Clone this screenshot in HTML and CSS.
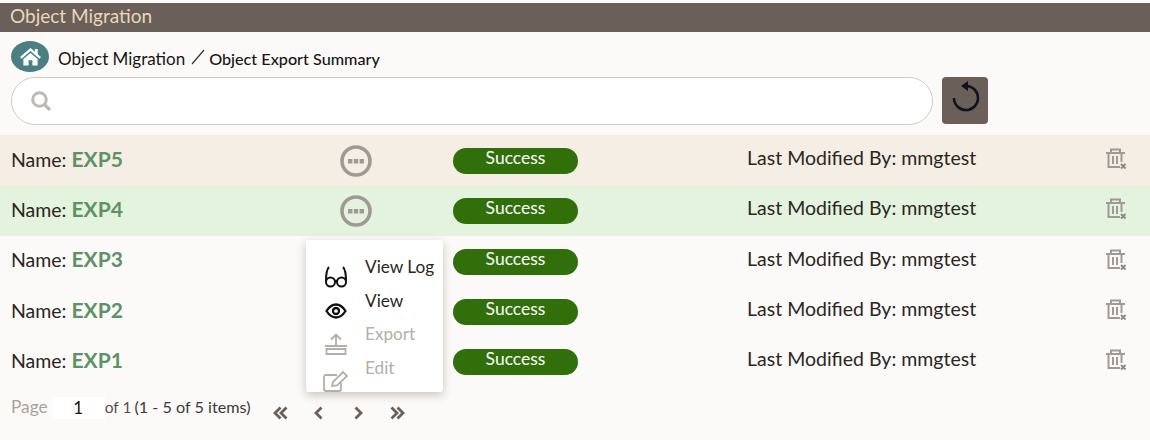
FILE: index.html
```html
<!DOCTYPE html>
<html lang="en">
<head>
<meta charset="utf-8">
<title>Object Migration</title>
<link rel="stylesheet" href="styles.css">
</head>
<body>
<header class="title-bar">Object Migration</header>
<main class="content">
  <nav class="crumbs">
    <span class="home">
      <svg width="23" height="19" viewBox="0 0 24 20"><path fill="#fff" d="M12 1 L1 10.6 L2.6 12.3 L12 4.2 L21.4 12.3 L23 10.6 L19.6 7.6 V2 H16.6 V5 Z M4.5 12.6 V19.5 H10 V14 H14 V19.5 H19.5 V12.6 L12 6.2 Z"/></svg>
    </span>
    <span class="crumb-root">Object Migration</span>
    <svg class="crumb-sep" width="14" height="16" viewBox="0 0 14 16"><path d="M1 15 L13 1" stroke="#333" stroke-width="1.2" fill="none"/></svg>
    <span class="crumb-current">Object Export Summary</span>
  </nav>
  <div class="search-row">
    <div class="search">
      <svg width="22" height="22" viewBox="0 0 22 22"><circle cx="9.5" cy="9.5" r="6.8" fill="none" stroke="#bdbab7" stroke-width="3"/><path d="M14.5 14.5 L20 20" stroke="#bdbab7" stroke-width="3.2"/></svg>
    </div>
    <button class="refresh" type="button" aria-label="Refresh">
      <svg width="46" height="47" viewBox="0 0 46 47"><path d="M24 9 A12 12 0 1 1 12 21" fill="none" stroke="#10131c" stroke-width="2.600"/><path d="M19 9 L26 4 V14 Z" fill="#10131c"/></svg>
    </button>
  </div>
  <section class="rows">
    <div class="row row-sand">
      <div class="name">Name: <b>EXP5</b></div>
      <div class="more"><svg class="more-icon" viewBox="0 0 32 32"><circle cx="16" cy="16" r="14" fill="none" stroke="#a09a96" stroke-width="3.6"/><path d="M8 14 h4.400 v4.400 h-4.400 z M13.800 14 h4.400 v4.400 h-4.400 z M19.600 14 h4.400 v4.400 h-4.400 z" fill="#a09a96"/></svg></div>
      <div class="pill">Success</div>
      <div class="modified">Last Modified By: mmgtest</div>
      <div class="trash"><svg class="trash-icon" viewBox="0 0 22 22"><path d="M1 5 H20 M6 5 V1.500 H15 V5 M3.500 5 V19 H15 M8 8 V16 M12 8 V16 M16.500 5 V14" fill="none" stroke="#a09a96" stroke-width="2"/><path d="M16 16 L20.500 20.500 M20.500 16 L16 20.500" stroke="#8f8a86" stroke-width="2"/></svg></div>
    </div>
    <div class="row row-green">
      <div class="name">Name: <b>EXP4</b></div>
      <div class="more"><svg class="more-icon" viewBox="0 0 32 32"><circle cx="16" cy="16" r="14" fill="none" stroke="#a09a96" stroke-width="3.6"/><path d="M8 14 h4.400 v4.400 h-4.400 z M13.800 14 h4.400 v4.400 h-4.400 z M19.600 14 h4.400 v4.400 h-4.400 z" fill="#a09a96"/></svg></div>
      <div class="pill">Success</div>
      <div class="modified">Last Modified By: mmgtest</div>
      <div class="trash"><svg class="trash-icon" viewBox="0 0 22 22"><path d="M1 5 H20 M6 5 V1.500 H15 V5 M3.500 5 V19 H15 M8 8 V16 M12 8 V16 M16.500 5 V14" fill="none" stroke="#a09a96" stroke-width="2"/><path d="M16 16 L20.500 20.500 M20.500 16 L16 20.500" stroke="#8f8a86" stroke-width="2"/></svg></div>
    </div>
    <div class="row">
      <div class="name">Name: <b>EXP3</b></div>
      <div class="more"></div>
      <div class="pill">Success</div>
      <div class="modified">Last Modified By: mmgtest</div>
      <div class="trash"><svg class="trash-icon" viewBox="0 0 22 22"><path d="M1 5 H20 M6 5 V1.500 H15 V5 M3.500 5 V19 H15 M8 8 V16 M12 8 V16 M16.500 5 V14" fill="none" stroke="#a09a96" stroke-width="2"/><path d="M16 16 L20.500 20.500 M20.500 16 L16 20.500" stroke="#8f8a86" stroke-width="2"/></svg></div>
    </div>
    <div class="row">
      <div class="name">Name: <b>EXP2</b></div>
      <div class="more"></div>
      <div class="pill">Success</div>
      <div class="modified">Last Modified By: mmgtest</div>
      <div class="trash"><svg class="trash-icon" viewBox="0 0 22 22"><path d="M1 5 H20 M6 5 V1.500 H15 V5 M3.500 5 V19 H15 M8 8 V16 M12 8 V16 M16.500 5 V14" fill="none" stroke="#a09a96" stroke-width="2"/><path d="M16 16 L20.500 20.500 M20.500 16 L16 20.500" stroke="#8f8a86" stroke-width="2"/></svg></div>
    </div>
    <div class="row">
      <div class="name">Name: <b>EXP1</b></div>
      <div class="more"></div>
      <div class="pill">Success</div>
      <div class="modified">Last Modified By: mmgtest</div>
      <div class="trash"><svg class="trash-icon" viewBox="0 0 22 22"><path d="M1 5 H20 M6 5 V1.500 H15 V5 M3.500 5 V19 H15 M8 8 V16 M12 8 V16 M16.500 5 V14" fill="none" stroke="#a09a96" stroke-width="2"/><path d="M16 16 L20.500 20.500 M20.500 16 L16 20.500" stroke="#8f8a86" stroke-width="2"/></svg></div>
    </div>
  </section>
  <footer class="pager">
    <div class="pager-info">
      <span class="page-label">Page</span>
      <span class="page-input">1</span>
      <span class="page-of">of 1</span>
      <span class="page-range">(1 - 5 of 5 items)</span>
    </div>
    <div class="pager-nav">
      <svg class="nav-icon" viewBox="0 0 16 14"><path d="M7.500 1.500 L2 7 L7.500 12.500 M13.500 1.500 L8 7 L13.500 12.500" fill="none" stroke="#6a5f59" stroke-width="2.800"/></svg>
      <svg class="nav-icon" viewBox="0 0 16 14"><path d="M10.500 1.500 L5 7 L10.500 12.500" fill="none" stroke="#6a5f59" stroke-width="2.800"/></svg>
      <svg class="nav-icon" viewBox="0 0 16 14"><path d="M5.500 1.500 L11 7 L5.500 12.500" fill="none" stroke="#6a5f59" stroke-width="2.800"/></svg>
      <svg class="nav-icon" viewBox="0 0 16 14"><path d="M2.500 1.500 L8 7 L2.500 12.500 M8.500 1.500 L14 7 L8.500 12.500" fill="none" stroke="#6a5f59" stroke-width="2.800"/></svg>
    </div>
  </footer>
</main>
<div class="menu">
  <div class="menu-icons">
    <svg width="24" height="22" viewBox="0 0 24 22"><path d="M5 1 C3 3 2 8 2 15 M19 1 C21 3 22 8 22 15" fill="none" stroke="#111" stroke-width="2"/><circle cx="6.500" cy="16" r="4.500" fill="none" stroke="#111" stroke-width="2"/><circle cx="17.500" cy="16" r="4.500" fill="none" stroke="#111" stroke-width="2"/><path d="M11 15 H13" stroke="#111" stroke-width="2"/></svg>
    <svg width="22" height="16" viewBox="0 0 22 16"><path d="M1.500 8 C5 2.500 8 1.500 11 1.500 C14 1.500 17 2.500 20.500 8 C17 13.500 14 14.500 11 14.500 C8 14.500 5 13.500 1.500 8 Z" fill="none" stroke="#111" stroke-width="2.300"/><circle cx="11" cy="8" r="3" fill="none" stroke="#111" stroke-width="2.300"/></svg>
    <svg width="22" height="22" viewBox="0 0 22 22"><path d="M11 12 V2 M6 6.500 L11 1.500 L16 6.500 M0 13 H22 M1.500 16 H20.500 V21 H1.500 Z" fill="none" stroke="#b3afab" stroke-width="1.800"/></svg>
    <svg width="26" height="22" viewBox="0 0 26 22"><path d="M18 13 V19 Q18 21 16 21 H3 Q1 21 1 19 V7 Q1 5 3 5 H14" fill="none" stroke="#b3afab" stroke-width="1.800"/><path d="M9 16 L10 12 L20 2 L24 6 L14 15.500 Z" fill="none" stroke="#b3afab" stroke-width="1.800"/></svg>
  </div>
  <ul class="menu-items">
    <li>View Log</li>
    <li>View</li>
    <li class="disabled">Export</li>
    <li class="disabled">Edit</li>
  </ul>
</div>
</body>
</html>
```
FILE: styles.css
```css
* { box-sizing: border-box; }
html, body { margin: 0; height: 100%; }
body {
  position: relative;
  width: 1150px;
  height: 440px;
  overflow: hidden;
  padding-top: 3px;
  background: #fcfaf8;
  font-family: Lato, "Noto Sans", sans-serif;
  color: #2b2622;
}
.title-bar {
  height: 29px;
  padding-left: 10px;
  background: #6a5f59;
  color: #e9d7b7;
  font-size: 19px;
  line-height: 26px;
}
.content { padding: 9px 0 0 11px; }
.crumbs { display: flex; align-items: center; height: 31px; }
.home {
  display: flex;
  align-items: center;
  justify-content: center;
  width: 38px;
  height: 31px;
  border-radius: 50%;
  background: #4b7f83;
}
.crumb-root { margin: 4px 0 0 9px; font-size: 17px; color: #161513; }
.crumb-sep { margin: 0 4px 0 6px; }
.crumb-current { margin-top: 3px; font-size: 16.200px; font-weight: 500; color: #161513; }
.search-row { display: flex; gap: 9px; margin-top: 5px; }
.search {
  display: flex;
  align-items: center;
  width: 922px;
  height: 48px;
  padding-left: 18px;
  background: #fff;
  border: 1px solid #cfcbc8;
  border-radius: 24px;
}
.refresh {
  display: block;
  width: 46px;
  height: 47px;
  padding: 0;
  border: 0;
  border-radius: 4px;
  background: #6a5f59;
}
.refresh svg { display: block; }
.rows { margin: 10px 0 0 -11px; }
.row {
  display: grid;
  grid-template-columns: 325px 117px 125px 169px 358px 1fr;
  align-items: center;
  height: 50.300px;
  padding-left: 11px;
}
.row-sand { background: #f5eee4; }
.row-green { background: #e4f3de; }
.name { margin-top: -4px; font-size: 19.500px; color: #2b2622; }
.name b { font-size: 21px; font-weight: 700; color: #5d9266; }
.more { display: flex; justify-content: center; width: 40px; margin-top: 2px; }
.more-icon { width: 32px; height: 32px; }
.pill {
  height: 26px;
  margin-top: 2px;
  border-radius: 13px;
  background: #316f0a;
  color: #fff;
  font-size: 17.500px;
  line-height: 20px;
  text-align: center;
}
.modified { grid-column: 5; margin-top: -5px; font-size: 19.500px; color: #2b2622; }
.trash { grid-column: 6; margin-top: -2px; }
.trash-icon { display: block; width: 22px; height: 22px; }
.pager { display: flex; align-items: center; height: 44px; padding-top: 8px; }
.pager-info { display: flex; align-items: center; margin-top: -11px; }
.page-label { font-size: 17.300px; color: #a8a29d; }
.page-input {
  width: 53px;
  height: 22px;
  margin: 3px 0 0 4px;
  background: #fff;
  color: #161513;
  font-size: 17px;
  line-height: 22px;
  text-align: center;
}
.page-of { margin-right: 3px; font-size: 15.500px; color: #55504c; }
.page-range { font-size: 16.200px; color: #3e3934; }
.pager-nav { display: flex; gap: 22.700px; margin: 2px 0 0 22px; }
.nav-icon { width: 16px; height: 14px; }
.menu {
  position: absolute;
  left: 306px;
  top: 240px;
  display: flex;
  width: 137px;
  height: 152px;
  overflow: hidden;
  background: #fff;
  border-radius: 3px;
  box-shadow: 0 3px 10px rgba(40, 30, 20, 0.25);
}
.menu-icons {
  display: flex;
  flex-direction: column;
  align-items: center;
  gap: 14.500px;
  width: 59px;
  padding: 26px 0 0 0;
}
.menu-items {
  margin: 0;
  padding: 10px 0 0 0;
  list-style: none;
  font-size: 17.200px;
  line-height: 33.700px;
  color: #2b2622;
}
.menu-items .disabled { color: #b3afab; }
```
